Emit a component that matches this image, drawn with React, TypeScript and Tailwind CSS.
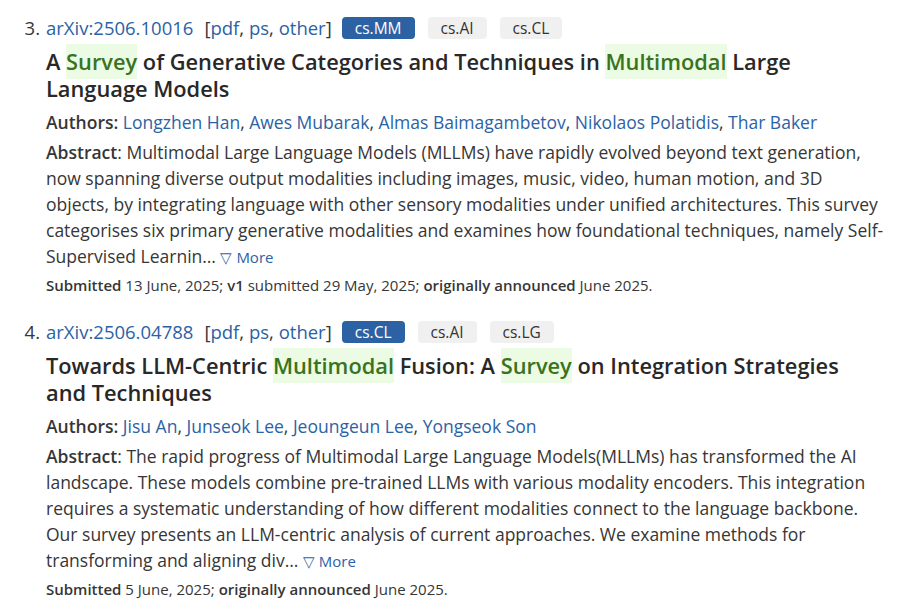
import React from 'react';

type Paper = {
  num: number;
  id: string;
  tags: { name: string; primary?: boolean }[];
  title: React.ReactNode;
  authors: string[];
  abstract: string;
  submitted: React.ReactNode;
};

function Hl({ children }: { children: React.ReactNode }) {
  return <span className="bg-[#ebfbe4] py-[3px] text-[#3a7320]">{children}</span>;
}

const papers: Paper[] = [
  {
    num: 3,
    id: '2506.10016',
    tags: [{ name: 'cs.MM', primary: true }, { name: 'cs.AI' }, { name: 'cs.CL' }],
    title: (
      <>
        A <Hl>Survey</Hl> of Generative Categories and Techniques in <Hl>Multimodal</Hl> Large Language Models
      </>
    ),
    authors: ['Longzhen Han', 'Awes Mubarak', 'Almas Baimagambetov', 'Nikolaos Polatidis', 'Thar Baker'],
    abstract:
      'Multimodal Large Language Models (MLLMs) have rapidly evolved beyond text generation, now spanning diverse output modalities including images, music, video, human motion, and 3D objects, by integrating language with other sensory modalities under unified architectures. This survey categorises six primary generative modalities and examines how foundational techniques, namely Self-Supervised Learnin\u2026',
    submitted: (
      <>
        <b className="font-semibold">Submitted</b> 13 June, 2025; <b className="font-semibold">v1</b> submitted 29 May, 2025;{' '}
        <b className="font-semibold">originally announced</b> June 2025.
      </>
    ),
  },
  {
    num: 4,
    id: '2506.04788',
    tags: [{ name: 'cs.CL', primary: true }, { name: 'cs.AI' }, { name: 'cs.LG' }],
    title: (
      <>
        Towards LLM-Centric <Hl>Multimodal</Hl> Fusion: A <Hl>Survey</Hl> on Integration Strategies and Techniques
      </>
    ),
    authors: ['Jisu An', 'Junseok Lee', 'Jeoungeun Lee', 'Yongseok Son'],
    abstract:
      'The rapid progress of Multimodal Large Language Models(MLLMs) has transformed the AI landscape. These models combine pre-trained LLMs with various modality encoders. This integration requires a systematic understanding of how different modalities connect to the language backbone. Our survey presents an LLM-centric analysis of current approaches. We examine methods for transforming and aligning div\u2026',
    submitted: (
      <>
        <b className="font-semibold">Submitted</b> 5 June, 2025; <b className="font-semibold">originally announced</b> June 2025.
      </>
    ),
  },
];

function Result({ p }: { p: Paper }) {
  return (
    <li className="flex">
      <span className="w-[40px] shrink-0 text-right text-[18.5px] leading-[24px]">{p.num}.</span>
      <div className="ml-[6px] w-[840px]">
        <div className="flex items-center text-[18.5px] leading-[24px]">
          <a className="text-[#2b62a6]">arXiv:{p.id}</a>
          <span className="ml-[11px]">
            [<a className="text-[#2b62a6]">pdf</a>, <a className="text-[#2b62a6]">ps</a>,{' '}
            <a className="text-[#2b62a6]">other</a>]
          </span>
          <div className="ml-[10px] flex gap-[13px]">
            {p.tags.map((t) => (
              <span
                key={t.name}
                className={
                  t.primary
                    ? 'rounded-[4px] bg-[#2c62a3] px-[13px] text-[15.5px] leading-[22px] text-white'
                    : 'rounded-[4px] bg-[#f0f0f0] px-[13px] text-[15.5px] leading-[22px] text-[#333]'
                }
              >
                {t.name}
              </span>
            ))}
          </div>
        </div>
        <p className="mt-[8px] max-w-[820px] text-[21.8px] font-semibold leading-[27px] text-[#282828]">{p.title}</p>
        <p className="mt-[7px] text-[17.5px] leading-[26px]">
          <span className="font-semibold">Authors:</span>{' '}
          {p.authors.map((a, i) => (
            <React.Fragment key={a}>
              <a className="text-[#2b62a6]">{a}</a>
              {i < p.authors.length - 1 ? ', ' : ''}
            </React.Fragment>
          ))}
        </p>
        <p className="mt-[4px] text-[17.5px] leading-[26px]">
          <span className="font-semibold">Abstract</span>: {p.abstract}{' '}
          <a className="text-[15px] text-[#2b62a6]">&#9661; More</a>
        </p>
        <p className="mt-[4px] text-[15px] leading-[22px]">{p.submitted}</p>
      </div>
    </li>
  );
}

export default function App() {
  return (
    <div className="h-[602px] w-[920px] overflow-hidden bg-white pt-[16px] text-[#363636]" style={{ fontFamily: '"Open Sans", sans-serif' }}>
      <ol className="flex flex-col gap-[24px]">
        {papers.map((p) => (
          <Result key={p.id} p={p} />
        ))}
      </ol>
    </div>
  );
}
